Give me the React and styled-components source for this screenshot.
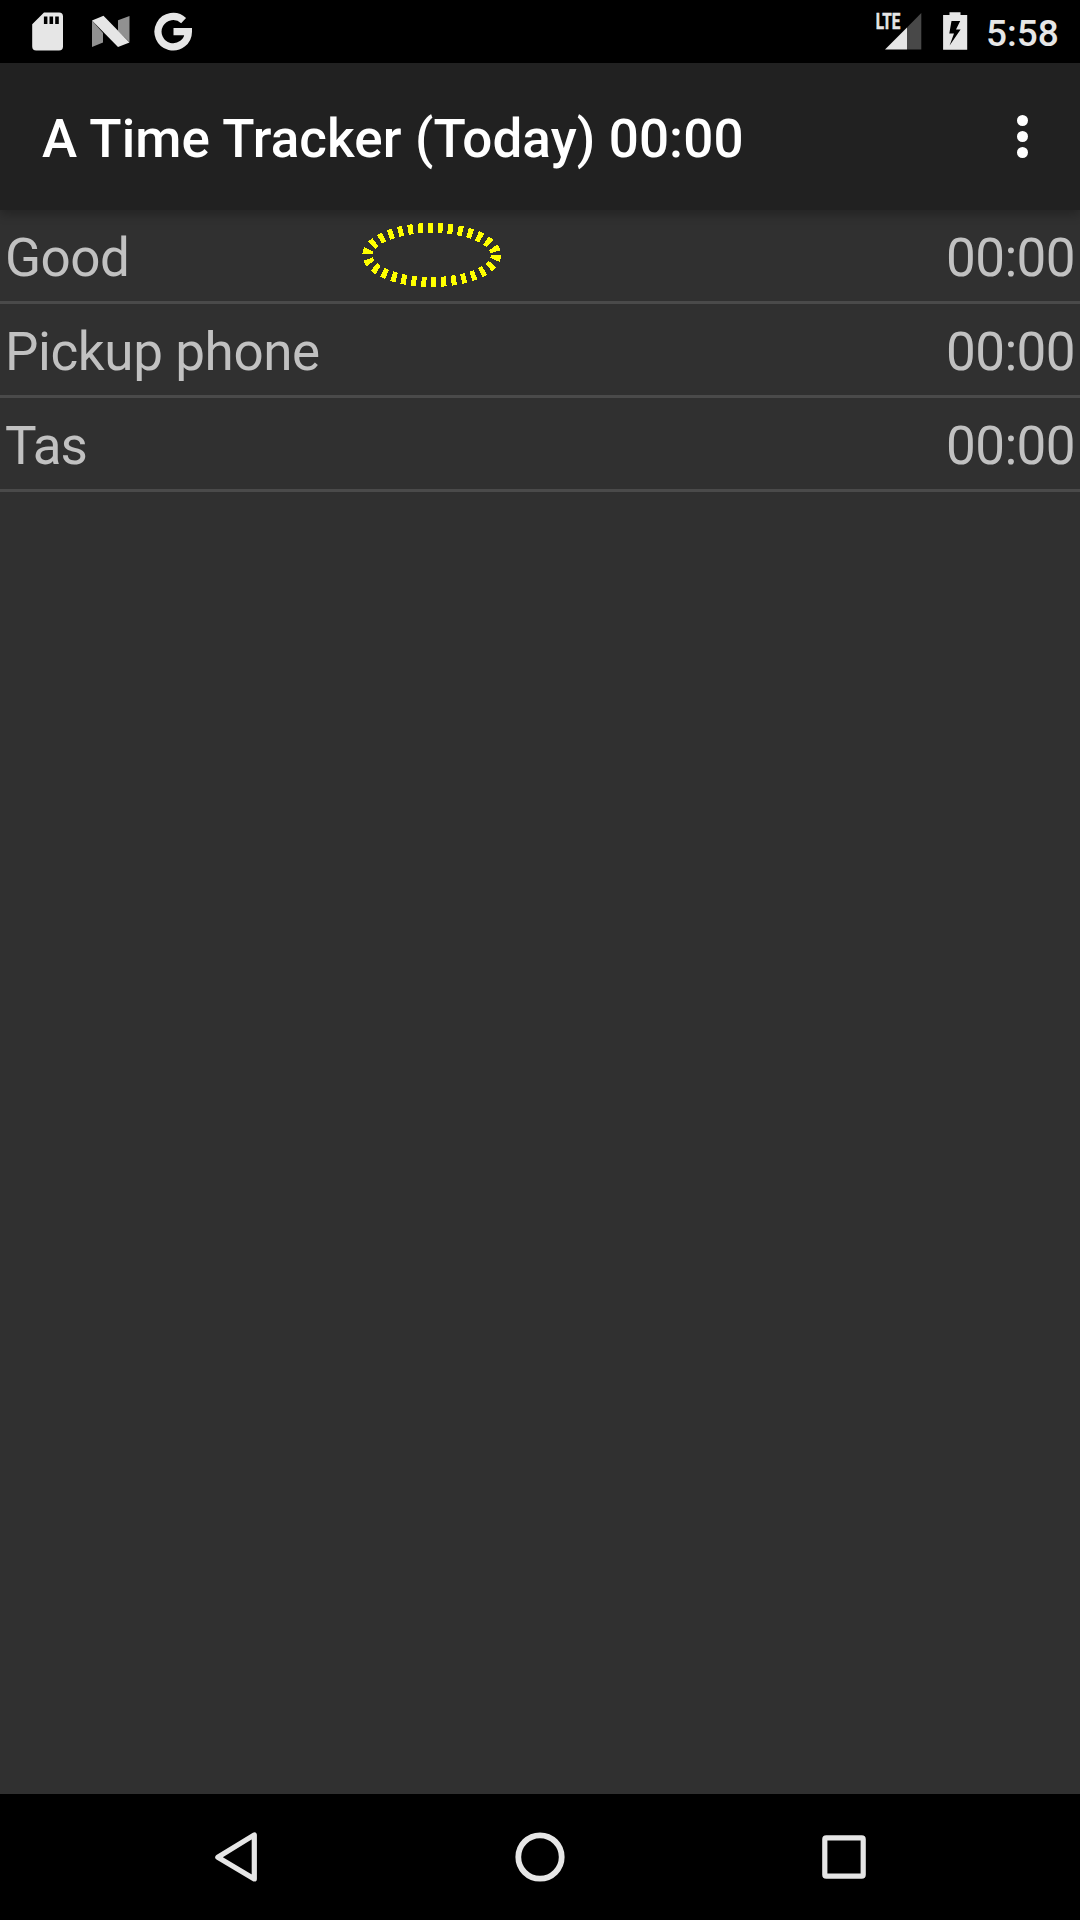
import React from "react";
import styled, { createGlobalStyle } from "styled-components";

const GlobalStyle = createGlobalStyle`
  html, body { margin: 0; padding: 0; background: #000; }
  * { box-sizing: border-box; }
`;

const Screen = styled.div`
  width: 1080px;
  height: 1920px;
  display: flex;
  flex-direction: column;
  overflow: hidden;
  background: #303030;
  font-family: Roboto, "Noto Sans", sans-serif;
`;

const StatusBar = styled.header`
  height: 63px;
  flex: none;
  display: flex;
  justify-content: space-between;
  padding: 0 21px 0 32px;
  background: #000;
  color: #e6e6e6;
`;

const StatusGroup = styled.div`
  display: flex;
`;

const StatusIcon = styled.svg`
  display: block;
  flex: none;
  width: ${(p) => p.$w}px;
  height: 63px;
  margin-right: ${(p) => p.$gap || 0}px;
`;

const NetworkLabel = styled.text`
  font-family: Roboto, sans-serif;
  font-size: 21.5px;
  font-weight: 700;
  fill: #e6e6e6;
  stroke: #e6e6e6;
  stroke-width: 0.5px;
`;

const Clock = styled.time`
  width: 73px;
  font-size: 37px;
  font-weight: 500;
  line-height: 43px;
  padding-top: 12px;
  white-space: nowrap;
`;

const AppBar = styled.div`
  height: 147px;
  flex: none;
  position: relative;
  z-index: 1;
  display: flex;
  align-items: center;
  justify-content: space-between;
  padding: 0 42px;
  background: #212121;
  box-shadow: 0 4px 10px rgba(0, 0, 0, 0.28);
`;

const Title = styled.h1`
  margin: 0;
  padding-top: 5px;
  font-size: 53px;
  letter-spacing: 0.11px;
  font-weight: 500;
  line-height: 62px;
  color: #fff;
  white-space: nowrap;
`;

const MenuButton = styled.button`
  width: 31px;
  height: 63px;
  padding: 0;
  border: 0;
  background: none;
  display: flex;
  flex-direction: column;
  align-items: center;
  justify-content: center;
  gap: 5px;
`;

const Dot = styled.span`
  width: 11px;
  height: 11px;
  border-radius: 50%;
  background: #fff;
`;

const TaskList = styled.main`
  flex: 1;
  position: relative;
`;

const TaskRow = styled.div`
  height: 94px;
  display: flex;
  justify-content: space-between;
  padding: 17px 5px 0;
  border-bottom: 3px solid #4a4a4a;
  font-size: 53px;
  line-height: 62px;
  color: #c1c1c1;
`;

const TaskName = styled.span`
  letter-spacing: ${(p) => p.$tracking}px;
`;

const TaskTime = styled.span`
  letter-spacing: -0.6px;
`;

const Highlight = styled.svg`
  position: absolute;
  left: 360px;
  top: 10px;
  width: 144px;
  height: 70px;
`;

const NavBar = styled.nav`
  height: 126px;
  flex: none;
  display: flex;
  justify-content: center;
  align-items: center;
  background: #000;
`;

const NavButton = styled.button`
  width: 304px;
  height: 126px;
  padding: 0;
  border: 0;
  background: none;
  display: flex;
  align-items: center;
  justify-content: center;

  svg {
    display: block;
    width: 64px;
    height: 64px;
    fill: none;
    stroke: #e6e6e6;
    stroke-linejoin: round;
  }
`;

const tasks = [
  { name: "Good", time: "00:00", tracking: -0.5 },
  { name: "Pickup phone", time: "00:00", tracking: -0.4 },
  { name: "Tas", time: "00:00", tracking: -1 },
];

export default function App() {
  return (
    <Screen>
      <GlobalStyle />
      <StatusBar>
        <StatusGroup>
          <StatusIcon $w={31} $gap={29} viewBox="32 0 31 63">
            <path
              fill="#e6e6e6"
              fillRule="evenodd"
              d="M44 12.5H59Q63 12.5 63 16.5V46.5Q63 50.5 59 50.5H36.2Q32.2 50.5 32.2 46.5V24.3ZM43.9 16.6V24H47.4V16.6ZM49.5 16.6V24H53.1V16.6ZM55.2 16.6V24H58.8V16.6Z"
            />
          </StatusIcon>
          <StatusIcon $w={38} $gap={24} viewBox="92 0 38 63">
            <path fill="#919191" d="M92 20.5L103 33V42.5L92 47ZM118 20.2L129.5 16V42L118 31Z" />
            <path fill="#e6e6e6" d="M92 20.5L103.5 15.8L129.5 42.5L118 47Z" />
          </StatusIcon>
          <StatusIcon $w={39} viewBox="154 0 39 63">
            <path
              fill="none"
              stroke="#e6e6e6"
              strokeWidth="7.2"
              d="M183.6 20.6A15.2 15.2 0 1 0 188.4 31.7H173.5"
            />
          </StatusIcon>
        </StatusGroup>
        <StatusGroup>
          <StatusIcon $w={46} $gap={21} viewBox="876 0 46 63">
            <path fill="#e6e6e6" d="M885 49.4L907 27.4V49.4Z" />
            <path fill="#484848" d="M907 27.4L921.3 13.1V49.4H907Z" />
            <NetworkLabel x="875.8" y="29" textLength="24.6" lengthAdjust="spacingAndGlyphs">
              LTE
            </NetworkLabel>
          </StatusIcon>
          <StatusIcon $w={25} $gap={18} viewBox="943 0 25 63">
            <path
              fill="#e6e6e6"
              fillRule="evenodd"
              d="M949.5 12.2H960.5V15H967.2V49.8H943.1V15H949.5ZM951.5 21L949.3 33.4H954L949.6 45.5L960.6 29.6H956L960.2 21Z"
            />
          </StatusIcon>
          <Clock>5:58</Clock>
        </StatusGroup>
      </StatusBar>
      <AppBar>
        <Title>A Time Tracker (Today) 00:00</Title>
        <MenuButton aria-label="More options">
          <Dot />
          <Dot />
          <Dot />
        </MenuButton>
      </AppBar>
      <TaskList>
        {tasks.map((task) => (
          <TaskRow key={task.name}>
            <TaskName $tracking={task.tracking}>{task.name}</TaskName>
            <TaskTime>{task.time}</TaskTime>
          </TaskRow>
        ))}
        <Highlight viewBox="360 220 144 70">
          <ellipse
            cx="431.7"
            cy="255"
            rx="64.3"
            ry="27"
            fill="none"
            stroke="#ff0"
            strokeWidth="10"
            strokeDasharray="5 5"
            shapeRendering="crispEdges"
          />
        </Highlight>
      </TaskList>
      <NavBar>
        <NavButton aria-label="Back">
          <svg viewBox="204 1825 64 64">
            <path strokeWidth="5.2" d="M217.8 1857.3L254.3 1834.9V1878.9Z" />
          </svg>
        </NavButton>
        <NavButton aria-label="Home">
          <svg viewBox="508 1825 64 64">
            <circle cx="540" cy="1857" r="21.7" strokeWidth="5.8" />
          </svg>
        </NavButton>
        <NavButton aria-label="Overview">
          <svg viewBox="812 1825 64 64">
            <rect x="824.8" y="1837.8" width="38.4" height="38.4" rx="1.5" strokeWidth="5.2" />
          </svg>
        </NavButton>
      </NavBar>
    </Screen>
  );
}
